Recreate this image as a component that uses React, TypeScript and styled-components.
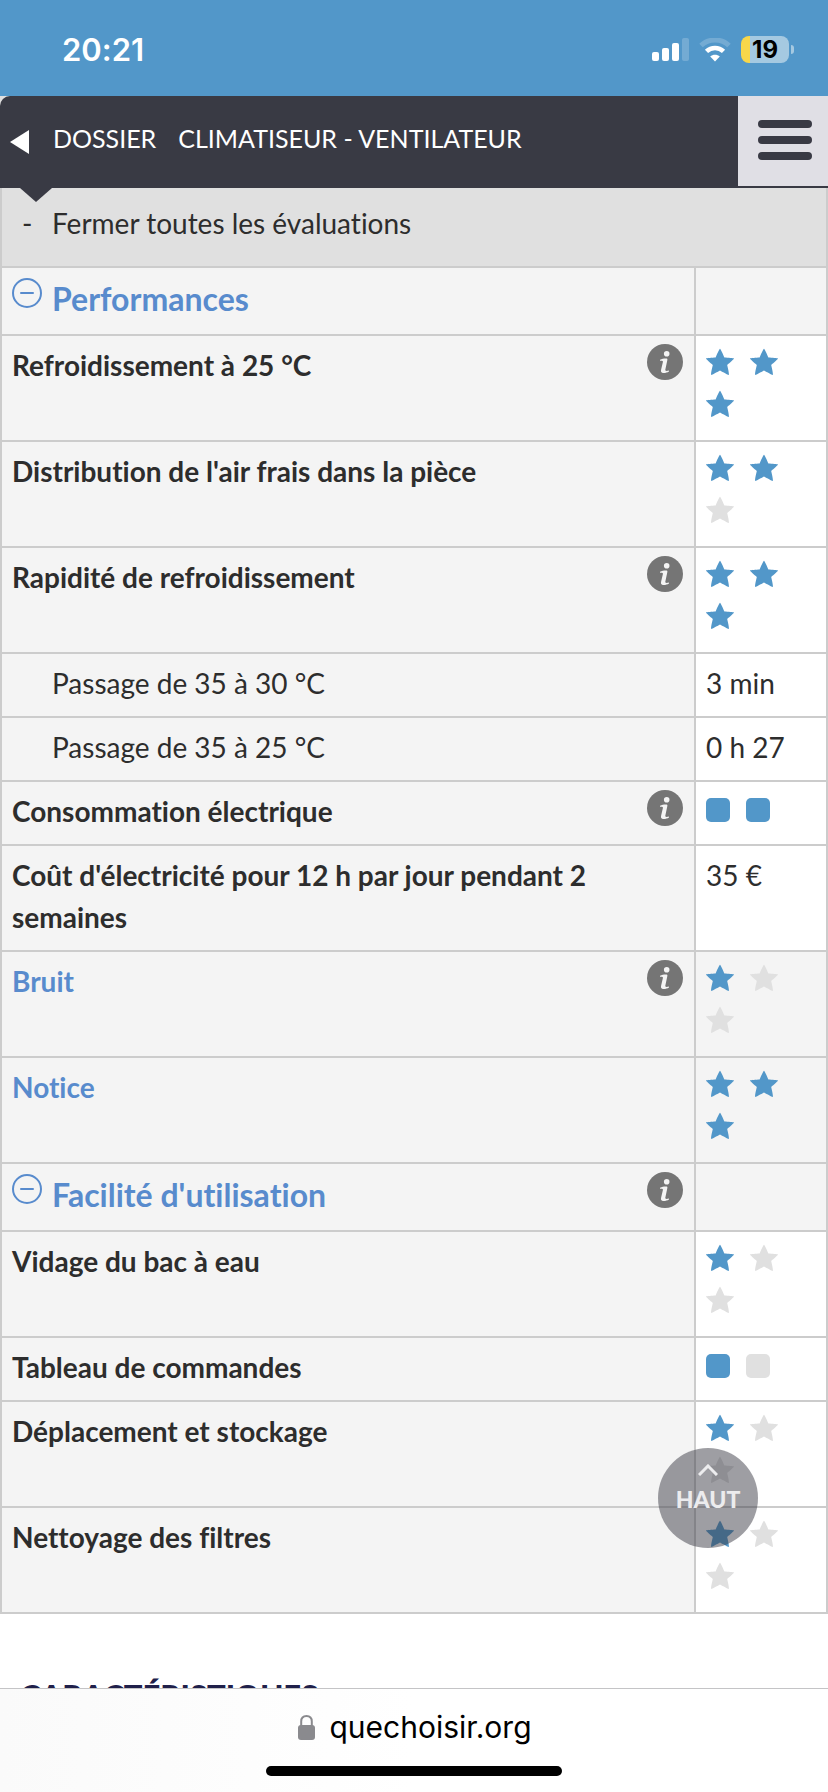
import React from "react";
import styled, { createGlobalStyle } from "styled-components";

const colors = {
  blue: "#5297c9",
  link: "#588bcd",
  dark: "#393a44",
  line: "#cccccc",
  panel: "#f4f4f4",
  off: "#e0e0e0",
  text: "#2d2d2d",
};

const GlobalStyle = createGlobalStyle`
  * { box-sizing: border-box; }
  body {
    margin: 0;
    background: #fff;
    color: ${colors.text};
    font-family: Lato, "Liberation Sans", sans-serif;
    font-variant-ligatures: none;
  }
  button { font: inherit; color: inherit; border: 0; padding: 0; background: none; cursor: pointer; }
  svg { display: block; flex: none; }
`;

const Screen = styled.div`
  position: relative;
  height: 100vh;
  display: flex;
  flex-direction: column;
  overflow: hidden;
`;

const StatusBar = styled.div`
  flex: none;
  height: 96px;
  padding: 3px 34px 0 62px;
  display: flex;
  align-items: center;
  justify-content: space-between;
  background: ${colors.blue};
  color: #fff;
  font-family: Inter, sans-serif;
`;

const Clock = styled.time`
  font-size: 31px;
  font-weight: 600;
`;

const StatusIcons = styled.div`
  display: flex;
  align-items: center;
  gap: 10px;
`;

const BatteryBox = styled.div`
  display: flex;
  align-items: center;
  gap: 2px;
`;

const BatteryBody = styled.div`
  width: 48px;
  height: 27px;
  border-radius: 8px;
  display: flex;
  align-items: center;
  justify-content: center;
  background: linear-gradient(to right, #f8d74a 9px, #a5c9e1 9px);
  color: #000;
  font-size: 24px;
  font-weight: 700;
  line-height: 27px;
`;

const BatteryTip = styled.div`
  width: 3px;
  height: 9px;
  border-radius: 0 3px 3px 0;
  background: #a5c9e1;
`;

const HeaderBack = styled.div`
  flex: none;
  position: relative;
  z-index: 1;
  background: ${colors.off};
`;

const Header = styled.header`
  height: 92px;
  display: flex;
  border-bottom: 2px solid ${colors.dark};
  border-top-left-radius: 10px;
  background: ${colors.dark};
`;

const BackButton = styled.button`
  width: 53px;
  && { padding: 2px 0 0 10px; }
  display: flex;
  align-items: center;
`;

const Crumbs = styled.nav`
  flex: 1;
  display: flex;
  gap: 22px;
  padding-top: 21px;
`;

const Crumb = styled.a`
  color: #fff;
  text-decoration: none;
  text-transform: uppercase;
  font-size: 25px;
  line-height: 42px;
`;

const MenuButton = styled.button`
  width: 90px;
  display: flex;
  flex-direction: column;
  align-items: center;
  justify-content: center;
  gap: 8px;
  && {
    padding: 0 16px 2px 20px;
    background: #e0dfe5;
  }
`;

const MenuLine = styled.span`
  width: 54px;
  height: 8px;
  border-radius: 4px;
  background: ${colors.dark};
`;

const Pointer = styled.div`
  position: absolute;
  top: 100%;
  left: 20px;
  border: solid transparent;
  border-width: 14px 16px 0;
  border-top-color: ${colors.dark};
`;

const Main = styled.main`
  flex: 1;
  min-height: 0;
  overflow: hidden;
`;

const CloseAll = styled.button`
  width: 100%;
  display: flex;
  && {
    border: solid ${colors.line};
    border-width: 0 2px 2px;
    padding: 14px 20px 22px;
    background: ${colors.off};
    font-size: 28px;
    line-height: 42px;
  }
  text-align: left;
`;

const Dash = styled.span`
  width: 30px;
`;

const Table = styled.table`
  width: 100%;
  table-layout: fixed;
  border-spacing: 0;
  border-left: 2px solid ${colors.line};
  font-size: 28px;
  line-height: 42px;
`;

const ValueCol = styled.col`
  width: 132px;
`;

const LabelCell = styled.th<{ $kind: Kind }>`
  padding: 8px 10px 12px ${(p) => (p.$kind === "sub" ? "50px" : "10px")};
  border: solid ${colors.line};
  border-width: 0 2px 2px 0;
  background: ${colors.panel};
  text-align: left;
  vertical-align: top;
  font-weight: ${(p) => (p.$kind === "sub" ? 400 : 700)};
  color: ${(p) => (p.$kind === "link" || p.$kind === "group" ? colors.link : colors.text)};
  font-size: ${(p) => (p.$kind === "group" ? "32px" : "28px")};
  line-height: ${(p) => (p.$kind === "group" ? "46px" : "42px")};
`;

const ValueCell = styled.td<{ $shaded: boolean }>`
  padding: 8px 8px 12px 10px;
  border: solid ${colors.line};
  border-width: 0 2px 2px 0;
  vertical-align: top;
  background: ${(p) => (p.$shaded ? colors.panel : "#fff")};
`;

const LabelLine = styled.div`
  display: flex;
  align-items: flex-start;
  justify-content: space-between;
  gap: 20px;
`;

const Toggle = styled.button`
  display: flex;
  align-items: flex-start;
  gap: 10px;

  svg { margin-top: 2px; }
`;

const InfoButton = styled.button`
  flex: none;
  margin-right: 1px;
`;

const Stars = styled.div`
  display: flex;
  flex-wrap: wrap;
  gap: 14px 16px;
  padding: 4px 0 10px;
`;

const Squares = styled.div`
  display: flex;
  gap: 16px;
  padding: 8px 0 10px;
`;

const Square = styled.span<{ $on: boolean }>`
  width: 24px;
  height: 24px;
  border-radius: 5px;
  background: ${(p) => (p.$on ? colors.blue : colors.off)};
`;

const SectionTitle = styled.h2`
  margin: 60px 20px 0;
  color: #20204a;
  font-size: 31px;
  line-height: 42px;
  font-weight: 900;
  text-transform: uppercase;
`;

const TopButton = styled.button`
  position: absolute;
  right: 70px;
  bottom: 244px;
  width: 100px;
  height: 100px;
  border-radius: 50%;
  display: flex;
  flex-direction: column;
  align-items: center;
  gap: 8px;
  && {
    padding-top: 16px;
    background: rgba(57, 58, 68, 0.49);
    color: #ececee;
    font-size: 23px;
    line-height: 30px;
    font-weight: 900;
  }
`;

const Footer = styled.footer`
  flex: none;
  height: 104px;
  padding: 19px 0 16px;
  display: flex;
  flex-direction: column;
  align-items: center;
  justify-content: space-between;
  border-top: 1px solid #c4c4c6;
  background: linear-gradient(to right, #fafafa, #fff 50%);
`;

const Address = styled.div`
  display: flex;
  align-items: center;
  gap: 14px;
  padding-left: 2px;
  color: #000;
  font-family: Inter, sans-serif;
  font-size: 30px;
  line-height: 38px;
`;

const HomeBar = styled.div`
  width: 296px;
  height: 10px;
  border-radius: 5px;
  background: #000;
`;

function Signal() {
  return (
    <svg width="37" height="24" viewBox="0 0 37 24" fill="#fff">
      <rect x="0" y="14" width="7" height="9" rx="2" />
      <rect x="10" y="10" width="7" height="13" rx="2" />
      <rect x="20" y="5" width="7" height="18" rx="2" />
      <rect x="30" y="0" width="7" height="23" rx="2" opacity=".2" />
    </svg>
  );
}

function Wifi() {
  return (
    <svg width="32" height="24" viewBox="0 0 32 24" fill="none">
      <path d="M2 7.5C9.500 .2 22.500 .2 30 7.500" stroke="#fff" strokeWidth="5" opacity=".2" />
      <path d="M7.500 13.300C12.200 8.800 19.800 8.800 24.500 13.300" stroke="#fff" strokeWidth="4.600" />
      <path d="M11.200 18.600C13.800 16 18.200 16 20.800 18.600L16 23.600Z" fill="#fff" />
    </svg>
  );
}

function Star({ on }: { on: boolean }) {
  return (
    <svg width="28" height="28" viewBox="0 0 28 28" fill={on ? colors.blue : colors.off}>
      <path d="M14 .8C14.600 .8 17 6.300 18.400 9.500C21.800 9.700 27.800 10 28 10.500C28.200 11.100 23.800 14.800 21.200 17.100C22 20.400 23.300 26.400 22.800 26.900C22.300 27.300 17.400 24.400 14 22.600C10.600 24.400 5.700 27.300 5.200 26.900C4.700 26.400 6 20.400 6.800 17.100C4.200 14.800 -.2 11.100 0 10.500C.2 10 6.200 9.700 9.600 9.500C11 6.300 13.400 .8 14 .8Z" />
    </svg>
  );
}

function InfoIcon() {
  return (
    <svg width="36" height="36" viewBox="0 0 36 36">
      <circle cx="18" cy="18" r="18" fill="#757575" />
      <circle cx="19.700" cy="9.800" r="2.800" fill="#f4f4f4" />
      <path
        d="M13 15.800C15 14.800 17.500 14.300 19.600 14.500C20.500 14.600 20.500 15.300 20.300 16.200L18.300 25.800C18.100 27 19.300 27.200 21.900 26.600L22 27.500C20 28.700 17.600 29.200 15.800 28.900C14 28.600 13.700 27.500 14.100 25.800L15.900 18.100C16.200 16.700 15 16.700 13 16.800Z"
        fill="#f4f4f4"
      />
    </svg>
  );
}

function MinusCircle() {
  return (
    <svg width="30" height="30" viewBox="0 0 30 30" fill="none" stroke={colors.link} strokeWidth="2">
      <circle cx="15" cy="15" r="14" />
      <path d="M9 15H21" strokeLinecap="round" />
    </svg>
  );
}

function Lock() {
  return (
    <svg width="17" height="25" viewBox="0 0 17 25">
      <path d="M3.200 11V6.500C3.200 3 5.400 1 8.500 1C11.600 1 13.800 3 13.800 6.500V11" fill="none" stroke="#8a8a8e" strokeWidth="2" />
      <rect y="10" width="17" height="15" rx="3" fill="#8a8a8e" />
    </svg>
  );
}

type Kind = "group" | "main" | "sub" | "link";

interface RowData {
  kind: Kind;
  label: string;
  info?: boolean;
  stars?: number;
  squares?: number;
  value?: string;
}

const rows: RowData[] = [
  { kind: "group", label: "Performances" },
  { kind: "main", label: "Refroidissement à 25 °C", info: true, stars: 3 },
  { kind: "main", label: "Distribution de l'air frais dans la pièce", stars: 2 },
  { kind: "main", label: "Rapidité de refroidissement", info: true, stars: 3 },
  { kind: "sub", label: "Passage de 35 à 30 °C", value: "3 min" },
  { kind: "sub", label: "Passage de 35 à 25 °C", value: "0 h 27" },
  { kind: "main", label: "Consommation électrique", info: true, squares: 2 },
  { kind: "main", label: "Coût d'électricité pour 12 h par jour pendant 2 semaines", value: "35 €" },
  { kind: "link", label: "Bruit", info: true, stars: 1 },
  { kind: "link", label: "Notice", stars: 3 },
  { kind: "group", label: "Facilité d'utilisation", info: true },
  { kind: "main", label: "Vidage du bac à eau", stars: 1 },
  { kind: "main", label: "Tableau de commandes", squares: 1 },
  { kind: "main", label: "Déplacement et stockage", stars: 1 },
  { kind: "main", label: "Nettoyage des filtres", stars: 1 },
];

function Row({ row }: { row: RowData }) {
  return (
    <tr>
      <LabelCell scope="row" $kind={row.kind}>
        <LabelLine>
          {row.kind === "group" ? (
            <Toggle type="button" aria-expanded="true">
              <MinusCircle />
              {row.label}
            </Toggle>
          ) : (
            <span>{row.label}</span>
          )}
          {row.info && (
            <InfoButton type="button" aria-label="Information">
              <InfoIcon />
            </InfoButton>
          )}
        </LabelLine>
      </LabelCell>
      <ValueCell $shaded={row.kind === "group" || row.kind === "link"}>
        {row.value}
        {row.stars !== undefined && (
          <Stars role="img" aria-label={`${row.stars} sur 3`}>
            {[1, 2, 3].map((n) => (
              <Star key={n} on={n <= row.stars!} />
            ))}
          </Stars>
        )}
        {row.squares !== undefined && (
          <Squares role="img" aria-label={`${row.squares} sur 2`}>
            {[1, 2].map((n) => (
              <Square key={n} $on={n <= row.squares!} />
            ))}
          </Squares>
        )}
      </ValueCell>
    </tr>
  );
}

export default function App() {
  return (
    <Screen>
      <GlobalStyle />
      <StatusBar>
        <Clock>20:21</Clock>
        <StatusIcons>
          <Signal />
          <Wifi />
          <BatteryBox>
            <BatteryBody>19</BatteryBody>
            <BatteryTip />
          </BatteryBox>
        </StatusIcons>
      </StatusBar>
      <HeaderBack>
        <Header>
          <BackButton type="button" aria-label="Retour">
            <svg width="19" height="24" viewBox="0 0 19 24" fill="#fff">
              <path d="M0 12L19 0V24Z" />
            </svg>
          </BackButton>
          <Crumbs>
            <Crumb href="#dossier">Dossier</Crumb>
            <Crumb href="#climatiseur">Climatiseur - Ventilateur</Crumb>
          </Crumbs>
          <MenuButton type="button" aria-label="Menu">
            <MenuLine />
            <MenuLine />
            <MenuLine />
          </MenuButton>
        </Header>
        <Pointer />
      </HeaderBack>
      <Main>
        <CloseAll type="button">
          <Dash>-</Dash>
          Fermer toutes les évaluations
        </CloseAll>
        <Table>
          <colgroup>
            <col />
            <ValueCol />
          </colgroup>
          <tbody>
            {rows.map((row) => (
              <Row key={row.label} row={row} />
            ))}
          </tbody>
        </Table>
        <SectionTitle>Caractéristiques</SectionTitle>
      </Main>
      <TopButton type="button">
        <svg width="20" height="12" viewBox="0 0 20 12" fill="none" stroke="#ececee" strokeWidth="3">
          <path d="M1 11L10 2L19 11" />
        </svg>
        HAUT
      </TopButton>
      <Footer>
        <Address>
          <Lock />
          quechoisir.org
        </Address>
        <HomeBar />
      </Footer>
    </Screen>
  );
}
